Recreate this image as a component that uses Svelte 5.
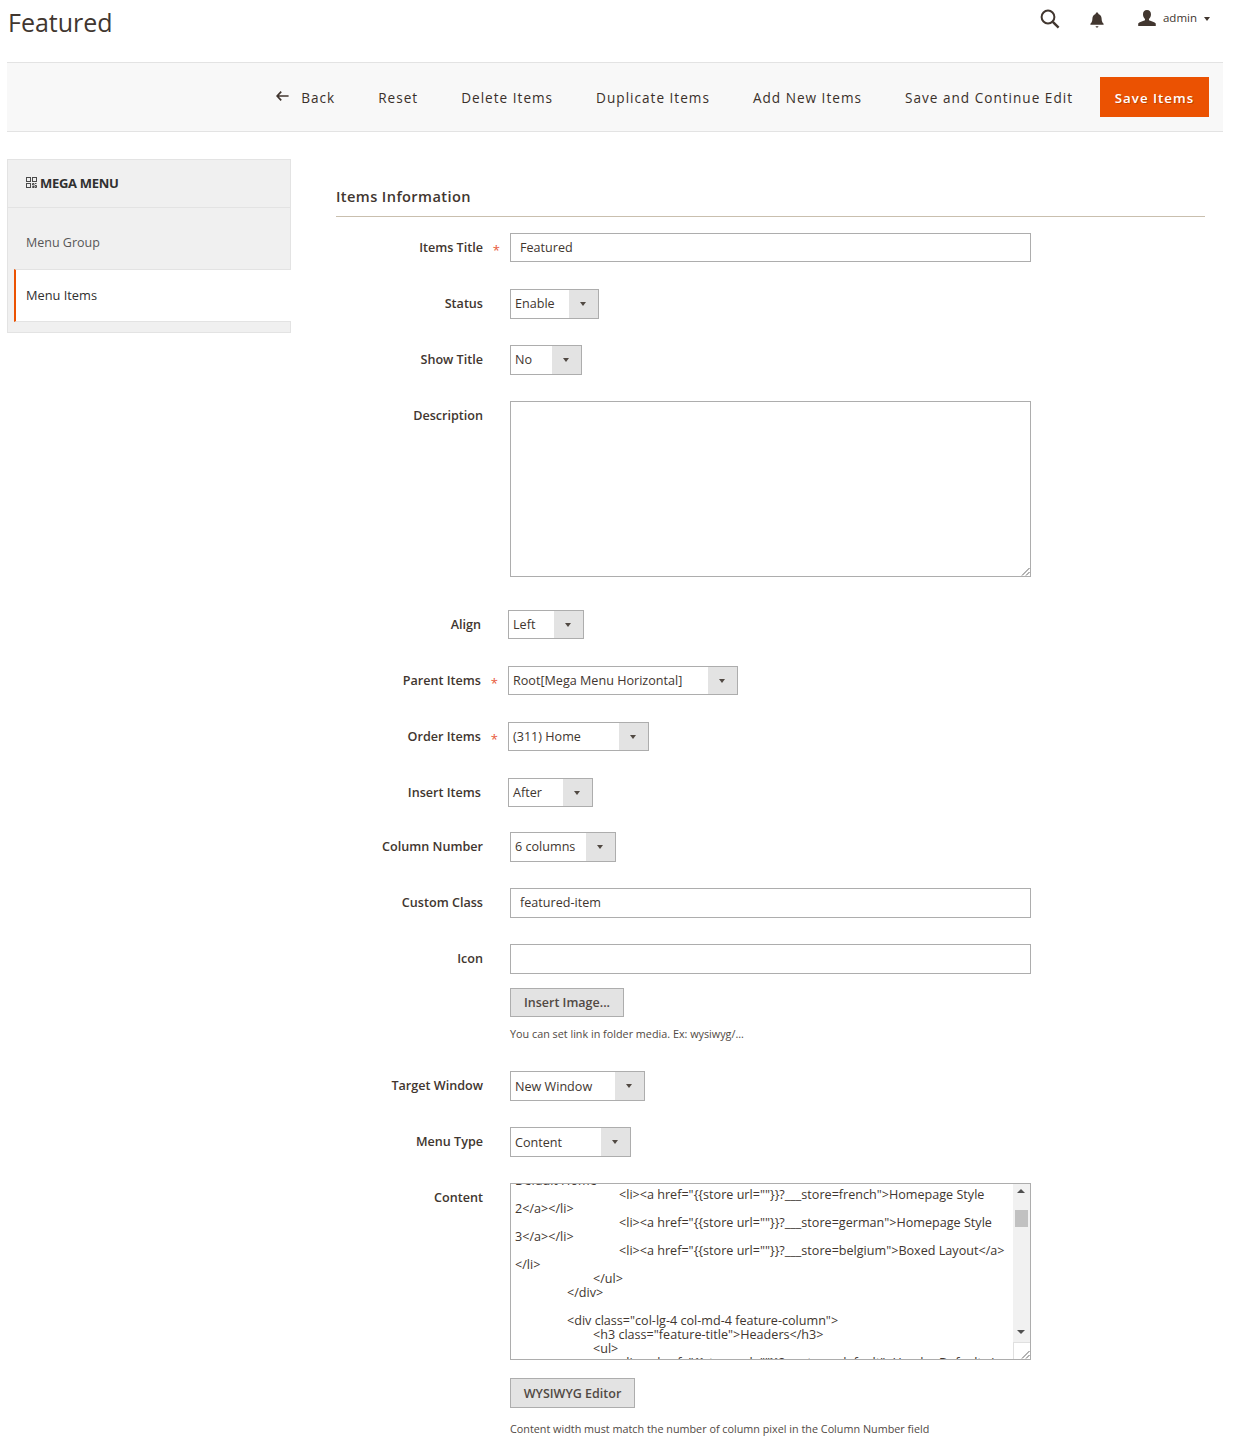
<script>
  const actions = ["Reset", "Delete Items", "Duplicate Items", "Add New Items", "Save and Continue Edit"];

  // indent = how many 26px levels the line sits in
  const contentLines = [
    [4, '<li><a href="{{store url=""}}?___store=french">Homepage Style'],
    [0, "2</a></li>"],
    [4, '<li><a href="{{store url=""}}?___store=german">Homepage Style'],
    [0, "3</a></li>"],
    [4, '<li><a href="{{store url=""}}?___store=belgium">Boxed Layout</a>'],
    [0, "</li>"],
    [3, "</ul>"],
    [2, "</div>"],
    [0, ""],
    [2, '<div class="col-lg-4 col-md-4 feature-column">'],
    [3, '<h3 class="feature-title">Headers</h3>'],
    [3, "<ul>"],
    [4, '<li><a href="{{store url=""}}?___store=default">Header Default</a>'],
  ];
</script>

<div class="page">
  <header class="top">
    <h1>Featured</h1>
    <div class="top-tools">
      <svg class="ic-search" width="20" height="20" viewBox="0 0 20 20">
        <circle cx="8" cy="8" r="6.4" fill="none" stroke="#41362f" stroke-width="2" />
        <path d="M12.8 12.8 L18.6 18.6" stroke="#41362f" stroke-width="2.4" fill="none" />
      </svg>
      <svg class="ic-bell" width="14" height="16" viewBox="0 0 14 16">
        <path d="M7 0.6c.8 0 1.3.5 1.4 1.3 2.1.6 3.1 2.3 3.2 4.5.1 2.4.5 3.9 2 5.4v1H.4v-1c1.500-1.500 1.900-3 2-5.400.1-2.200 1.100-3.900 3.200-4.500C5.700 1.100 6.200.6 7 .6z" fill="#41362f" />
        <path d="M5.600 14.300h2.800c0 .8-.6 1.300-1.400 1.300s-1.400-.5-1.400-1.300z" fill="#41362f" />
      </svg>
      <div class="user">
        <svg width="18" height="16" viewBox="0 0 18 16">
          <path d="M9 0c2.600 0 4 1.700 4 4.300 0 2-.8 3.700-2 4.600v1.300c2.500.9 5.800 1.700 6.800 3.400V16H.2v-2.400c1-1.700 4.300-2.500 6.800-3.400V8.900c-1.200-.9-2-2.600-2-4.600C5 1.700 6.400 0 9 0z" fill="#41362f" />
        </svg>
        <span class="user-name">admin</span>
        <i class="user-caret"></i>
      </div>
    </div>
  </header>

  <div class="actions">
    <button class="act">
      <svg class="ic-back" width="13" height="10" viewBox="0 0 13 10">
        <path d="M5.200.6 1.100 5l4.100 4.400M1.300 5H12.600" fill="none" stroke="#41362f" stroke-width="1.700" />
      </svg>
      Back
    </button>
    {#each actions as a}
      <button class="act">{a}</button>
    {/each}
    <button class="save">Save Items</button>
  </div>

  <div class="columns">
    <aside class="side">
      <div class="side-head">
        <svg width="11" height="11" viewBox="0 0 11 11" fill="none" stroke="#4a4a4a" stroke-width="1">
          <rect x="0.500" y="0.500" width="4" height="4" />
          <rect x="6.500" y="0.500" width="4" height="4" />
          <rect x="0.500" y="6.500" width="4" height="4" />
          <path d="M6.500 6.500h1.500v1.500h-1.500zM9 6.500h1.500M6.500 9.500h1.500v1h-1.500zM9 8.500h1.500v2H9z" />
        </svg>
        <span>MEGA MENU</span>
      </div>
      <div class="side-link">Menu Group</div>
      <div class="side-link active">Menu Items</div>
      <div class="side-foot"></div>
    </aside>

    <main class="form">
      <h2>Items Information</h2>

      <div class="row r-title">
        <label class="req">Items Title</label>
        <input class="text" value="Featured" />
      </div>

      <div class="row">
        <label>Status</label>
        <div class="select" style="width:89px"><span>Enable</span><b></b></div>
      </div>

      <div class="row">
        <label>Show Title</label>
        <div class="select" style="width:72px"><span>No</span><b></b></div>
      </div>

      <div class="row r-desc">
        <label>Description</label>
        <div class="area desc"><svg class="grip" width="9" height="9" viewBox="0 0 9 9"><path d="M8.500 1 1 8.500M8.500 5 5 8.500" stroke="#666" fill="none" /></svg></div>
      </div>

      <div class="row tight">
        <label>Align</label>
        <div class="select" style="width:76px"><span>Left</span><b></b></div>
      </div>

      <div class="row tight">
        <label class="req">Parent Items</label>
        <div class="select" style="width:230px"><span>Root[Mega Menu Horizontal]</span><b></b></div>
      </div>

      <div class="row tight">
        <label class="req">Order Items</label>
        <div class="select" style="width:141px"><span>(311) Home</span><b></b></div>
      </div>

      <div class="row tight r-insert">
        <label>Insert Items</label>
        <div class="select" style="width:85px"><span>After</span><b></b></div>
      </div>

      <div class="row">
        <label>Column Number</label>
        <div class="select" style="width:106px"><span>6 columns</span><b></b></div>
      </div>

      <div class="row">
        <label>Custom Class</label>
        <input class="text" value="featured-item" />
      </div>

      <div class="row r-icon">
        <label>Icon</label>
        <div class="stack">
          <input class="text" value="" />
          <button class="grey btn-image">Insert Image...</button>
          <p class="note">You can set link in folder media. Ex: wysiwyg/...</p>
        </div>
      </div>

      <div class="row r-low">
        <label>Target Window</label>
        <div class="select" style="width:135px"><span>New Window</span><b></b></div>
      </div>

      <div class="row r-low">
        <label>Menu Type</label>
        <div class="select" style="width:121px"><span>Content</span><b></b></div>
      </div>

      <div class="row r-content">
        <label>Content</label>
        <div class="stack">
          <div class="area code">
            <div class="code-lines">
              <div class="code-line cut">Default Home</div>
              {#each contentLines as [indent, line]}
                <div class="code-line" style="padding-left:{indent * 26}px">{line}</div>
              {/each}
            </div>
            <div class="scroll">
              <i class="arr up"></i>
              <i class="thumb"></i>
              <i class="arr down"></i>
            </div>
            <div class="corner"><svg width="9" height="9" viewBox="0 0 9 9"><path d="M8.500 1 1 8.500M8.500 5 5 8.500" stroke="#666" fill="none" /></svg></div>
          </div>
          <button class="grey btn-wys">WYSIWYG Editor</button>
          <p class="note">Content width must match the number of column pixel in the Column Number field</p>
        </div>
      </div>
    </main>
  </div>
</div>

<style>
  :global(body) {
    margin: 0;
    background: #fff;
    font-family: "Open Sans", "Liberation Sans", sans-serif;
    color: #41362f;
  }

  button {
    font-family: inherit;
    cursor: pointer;
  }

  .page {
    width: 1240px;
    height: 1447px;
    overflow: hidden;
  }

  .top {
    height: 62px;
    display: flex;
    justify-content: space-between;
    align-items: flex-start;
    padding: 0 30px 0 8px;
  }

  h1 {
    margin: 4px 0 0;
    font-size: 25px;
    line-height: 36px;
    font-weight: 400;
  }

  .top-tools {
    display: flex;
    align-items: flex-start;
    padding-top: 9px;
  }

  .ic-search {
    margin-right: 30px;
  }

  .ic-bell {
    margin-top: 3px;
    margin-right: 34px;
  }

  .user {
    display: flex;
    align-items: center;
    height: 18px;
    width: 72px;
  }

  .user-name {
    font-size: 11.500px;
    margin-left: 7px;
    margin-top: -1px;
    color: #41362f;
  }

  .user-caret {
    margin-left: 7px;
    margin-top: 1px;
    border: 3px solid transparent;
    border-top: 4px solid #41362f;
    border-bottom: 0;
  }

  .actions {
    margin-left: 7px;
    width: 1216px;
    height: 70px;
    box-sizing: border-box;
    background: #f8f8f8;
    border-top: 1px solid #e3e3e3;
    border-bottom: 1px solid #e3e3e3;
    display: flex;
    justify-content: flex-end;
    align-items: center;
    padding-right: 14px;
  }

  .act {
    background: none;
    border: 0;
    padding: 0;
    margin-right: 43px;
    font-size: 13.600px;
    letter-spacing: 1px;
    color: #3a302a;
    display: flex;
    align-items: center;
  }

  .ic-back {
    margin-right: 12px;
    margin-top: -2px;
  }

  .save {
    width: 109px;
    height: 40px;
    background: #eb5202;
    border: 0;
    padding: 1px 0 0;
    margin-left: -16px;
    color: #fff;
    font-size: 13.300px;
    font-weight: 600;
    letter-spacing: 1px;
    text-shadow: 1px 1px 0 rgba(0, 0, 0, 0.2);
  }

  .columns {
    display: flex;
    align-items: flex-start;
    padding-left: 7px;
  }

  .side {
    width: 284px;
    margin-top: 27px;
    box-sizing: border-box;
    background: #f0f0f0;
    border: 1px solid #e3e3e3;
  }

  .side-head {
    height: 48px;
    box-sizing: border-box;
    border-bottom: 1px solid #e3e3e3;
    display: flex;
    align-items: center;
    padding: 0 0 2px 18px;
    gap: 3px;
    font-size: 13px;
    font-weight: 700;
    letter-spacing: -0.3px;
    color: #303030;
  }

  .side-link {
    height: 61px;
    box-sizing: border-box;
    padding: 26px 0 0 18px;
    font-size: 12.500px;
    line-height: 18px;
    color: #575757;
  }

  .side-link.active {
    height: 53px;
    padding: 16px 0 0 10px;
    margin-left: 6px;
    margin-right: -1px;
    font-size: 12.800px;
    background: #fff;
    color: #303030;
    border-top: 1px solid #e3e3e3;
    border-bottom: 1px solid #e3e3e3;
    border-left: 2px solid #eb5202;
  }

  .side-foot {
    height: 10px;
  }

  .form {
    width: 869px;
    margin-left: 45px;
  }

  h2 {
    margin: 0;
    height: 85px;
    box-sizing: border-box;
    padding-top: 46px;
    font-size: 14.600px;
    line-height: 36px;
    font-weight: 600;
    letter-spacing: 0.4px;
    color: #41362f;
    border-bottom: 1px solid #c9bfae;
  }

  .row {
    display: flex;
    align-items: flex-start;
    margin-bottom: 26px;
  }

  .r-title {
    margin-top: 16px;
    margin-bottom: 27px;
  }

  .r-desc {
    margin-bottom: 33px;
  }

  .tight {
    margin-left: -2px;
    margin-bottom: 27px;
  }

  .r-insert {
    margin-bottom: 25px;
  }

  .r-icon {
    margin-bottom: 28px;
  }

  .r-content {
    margin-bottom: 0;
  }

  label {
    width: 147px;
    margin-right: 27px;
    flex: none;
    position: relative;
    text-align: right;
    font-size: 12.600px;
    line-height: 18px;
    padding-top: 6px;
    font-weight: 600;
    color: #41362f;
  }

  .req::after {
    content: "*";
    position: absolute;
    right: -17px;
    top: 8px;
    color: #e8593a;
    font-size: 13px;
    font-weight: 400;
  }

  .text {
    display: block;
    width: 521px;
    height: 30px;
    box-sizing: border-box;
    padding: 0 9px 1px;
    border: 1px solid #adadad;
    font-family: inherit;
    font-size: 12.600px;
    color: #41362f;
    outline: none;
  }

  .r-title .text {
    height: 29px;
    padding-bottom: 0;
  }

  .select {
    display: flex;
    height: 30px;
    box-sizing: border-box;
    border: 1px solid #adadad;
    background: #fff;
    font-size: 12.600px;
    line-height: 27px;
    color: #41362f;
  }

  .r-low .select {
    line-height: 29px;
  }

  .tight .select {
    height: 29px;
  }

  .select span {
    flex: 1;
    padding-left: 4px;
    white-space: nowrap;
    overflow: hidden;
  }

  .select b {
    flex: none;
    width: 29px;
    background: #e3e3e3;
    position: relative;
  }

  .select b::after {
    content: "";
    position: absolute;
    left: 11px;
    top: 12px;
    border: 3.750px solid transparent;
    border-top: 4px solid #514943;
    border-bottom: 0;
  }

  .area {
    position: relative;
    width: 521px;
    box-sizing: border-box;
    border: 1px solid #adadad;
    background: #fff;
    overflow: hidden;
  }

  .desc {
    height: 176px;
  }

  .grip {
    position: absolute;
    right: 0;
    bottom: 0;
  }

  .stack {
    display: flex;
    flex-direction: column;
    align-items: flex-start;
  }

  .grey {
    background: #e3e3e3;
    border: 1px solid #adadad;
    padding: 0;
    font-size: 12.500px;
    font-weight: 600;
    color: #514943;
    height: 29px;
  }

  .btn-image {
    width: 114px;
    margin-top: 14px;
  }

  .btn-wys {
    width: 125px;
    height: 30px;
    margin-top: 18px;
  }

  .note {
    margin: 0;
    padding-top: 8px;
    font-size: 10.800px;
    line-height: 18px;
    color: #514943;
  }

  .btn-wys + .note {
    padding-top: 12px;
  }

  .code {
    height: 177px;
  }

  .code-lines {
    margin-top: -10px;
    padding: 0 18px 0 4px;
    font-size: 12.600px;
    line-height: 14px;
    color: #41362f;
    white-space: nowrap;
  }

  .code-line {
    height: 14px;
  }

  .scroll {
    position: absolute;
    right: 0;
    top: 0;
    bottom: 0;
    width: 17px;
    background: #f1f1f1;
  }

  .thumb {
    position: absolute;
    left: 2px;
    top: 26px;
    width: 13px;
    height: 17px;
    background: #c1c1c1;
  }

  .arr {
    position: absolute;
    left: 4px;
    border: 4px solid transparent;
  }

  .arr.up {
    top: 5px;
    border-bottom: 4px solid #505050;
    border-top: 0;
  }

  .arr.down {
    bottom: 25px;
    border-top: 4px solid #505050;
    border-bottom: 0;
  }

  .corner {
    position: absolute;
    right: 0;
    bottom: 0;
    width: 17px;
    height: 17px;
    box-sizing: border-box;
    background: #fff;
    border-left: 1px solid #e0e0e0;
    border-top: 1px solid #e0e0e0;
    display: flex;
    align-items: flex-end;
    justify-content: flex-end;
  }
</style>
